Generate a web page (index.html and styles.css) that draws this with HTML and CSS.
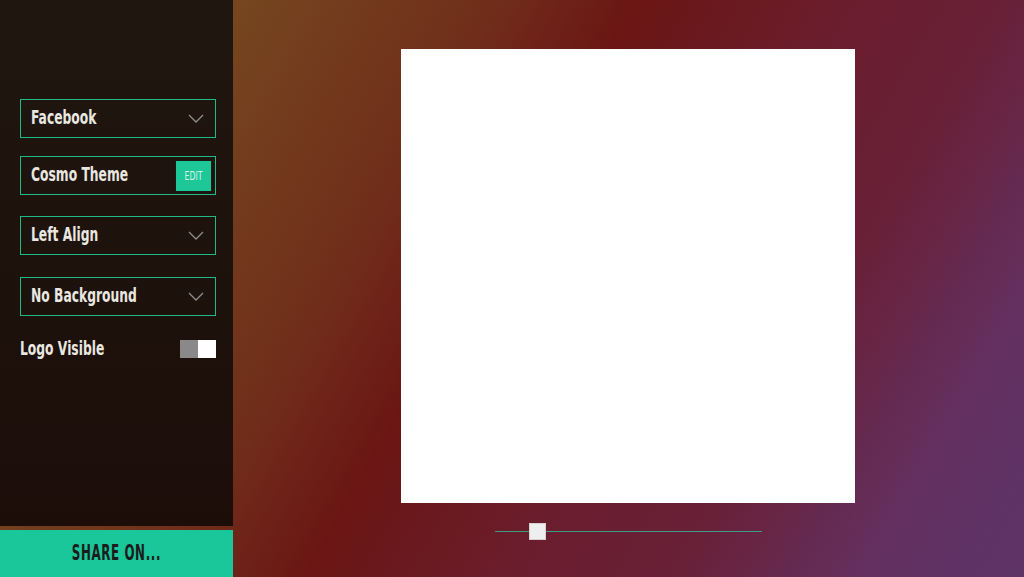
FILE: index.html
```html
<!DOCTYPE html>
<html>
<head>
<meta charset="utf-8">
<link rel="stylesheet" href="styles.css">
</head>
<body>
<aside class="sidebar">
  <div class="panel">
    <div class="field">
      <span class="label">Facebook</span>
      <svg class="chev" width="16" height="9" viewBox="0 0 16 9"><path d="M1 1 L8 8 L15 1" fill="none" stroke="#8f8d8a" stroke-width="1.3"/></svg>
    </div>
    <div class="field field-theme">
      <span class="label">Cosmo Theme</span>
      <span class="edit"><span class="edit-text">EDIT</span></span>
    </div>
    <div class="field field-gap">
      <span class="label">Left Align</span>
      <svg class="chev" width="16" height="9" viewBox="0 0 16 9"><path d="M1 1 L8 8 L15 1" fill="none" stroke="#8f8d8a" stroke-width="1.3"/></svg>
    </div>
    <div class="field field-gap2">
      <span class="label">No Background</span>
      <svg class="chev" width="16" height="9" viewBox="0 0 16 9"><path d="M1 1 L8 8 L15 1" fill="none" stroke="#8f8d8a" stroke-width="1.3"/></svg>
    </div>
    <div class="toggle-row">
      <span class="label">Logo Visible</span>
      <span class="toggle"><span class="toggle-off"></span><span class="toggle-on"></span></span>
    </div>
  </div>
  <div class="share"><span class="share-text">SHARE ON...</span></div>
</aside>
<main class="stage">
  <div class="canvas"></div>
  <div class="slider">
    <div class="track"></div>
    <div class="thumb"></div>
  </div>
</main>
</body>
</html>
```
FILE: styles.css
```css
* { box-sizing: border-box; }
html, body { margin: 0; padding: 0; }
body {
  width: 1024px;
  height: 577px;
  overflow: hidden;
  display: flex;
  font-family: "DejaVu Sans Condensed", "DejaVu Sans", sans-serif;
  font-weight: 700;
  background: linear-gradient(120deg,
    #7a4e22 0%, #75461f 18%, #702d1a 37%, #6b1614 47%,
    #6a1d2c 62%, #692139 75%, #633060 88%, #5e3468 100%);
}
.sidebar {
  width: 233px;
  height: 577px;
  display: flex;
  flex-direction: column;
  gap: 4px;
}
.panel {
  flex: 1;
  background: linear-gradient(to bottom, #1f170f, #1c0d09);
  padding: 99px 17px 0 20px;
  display: flex;
  flex-direction: column;
}
.field {
  height: 39px;
  border: 1px solid #1fb98a;
  display: flex;
  align-items: center;
  justify-content: space-between;
  padding: 0 11px 0 10px;
}
.field + .field { margin-top: 18px; }
.field.field-gap { margin-top: 21px; }
.field.field-gap2 { margin-top: 22px; }
.field-theme { padding-right: 4px; }
.label {
  display: inline-block;
  color: #e9e7e0;
  font-size: 19px;
  line-height: 20px;
  margin-bottom: 3px;
  transform: scaleX(0.72);
  transform-origin: left center;
  white-space: nowrap;
}
.chev { display: block; }
.edit {
  width: 35px;
  height: 30px;
  background: #1ec798;
  outline: 1px solid #1a1a14;
  display: flex;
  align-items: center;
  justify-content: center;
}
.edit-text {
  display: inline-block;
  color: #d9f3ea;
  font-size: 12px;
  font-weight: 400;
  transform: scaleX(0.72);
}
.toggle-row {
  margin-top: 24px;
  display: flex;
  align-items: center;
  justify-content: space-between;
  height: 18px;
}
.toggle { display: flex; width: 36px; height: 18px; }
.toggle-off { flex: 1; background: #8a8888; }
.toggle-on { flex: 1; background: #ffffff; }
.share {
  height: 47px;
  background: #19c79a;
  display: flex;
  align-items: center;
  justify-content: center;
}
.share-text {
  display: inline-block;
  color: #1b1b1b;
  font-size: 22px;
  letter-spacing: 1px;
  margin-bottom: 2px;
  transform: scaleX(0.6);
  white-space: nowrap;
}
.stage {
  flex: 1;
  display: flex;
  flex-direction: column;
  align-items: center;
  padding-top: 49px;
  padding-right: 1px;
}
.canvas {
  width: 454px;
  height: 454px;
  background: #ffffff;
}
.slider {
  position: relative;
  width: 267px;
  height: 17px;
  margin-top: 20px;
}
.track {
  position: absolute;
  left: 0; right: 0; top: 8px;
  height: 1px;
  background: #3e9c86;
}
.thumb {
  position: absolute;
  left: 34px; top: 0;
  width: 17px; height: 17px;
  background: #eeeeee;
  border: 1px solid #d8cfd2;
}
```
